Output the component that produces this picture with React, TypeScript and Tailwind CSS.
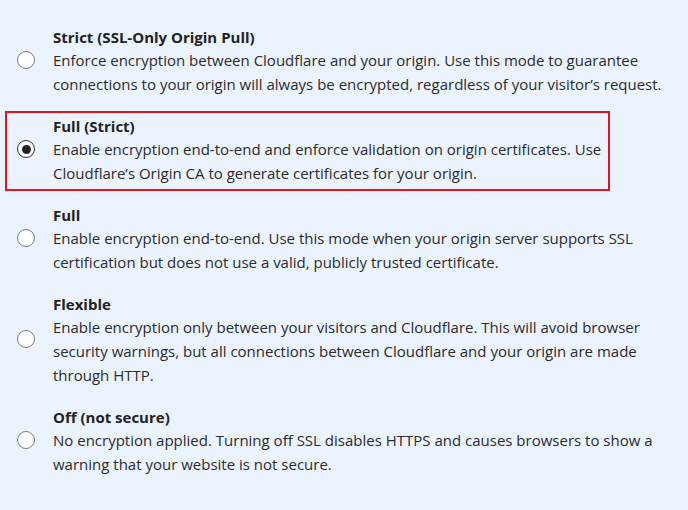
import React from 'react';

type Mode = {
  id: string;
  title: string;
  desc: string;
};

const modes: Mode[] = [
  {
    id: 'strict-ssl',
    title: 'Strict (SSL-Only Origin Pull)',
    desc: 'Enforce encryption between Cloudflare and your origin. Use this mode to guarantee connections to your origin will always be encrypted, regardless of your visitor\u2019s request.',
  },
  {
    id: 'full-strict',
    title: 'Full (Strict)',
    desc: 'Enable encryption end-to-end and enforce validation on origin certificates. Use Cloudflare\u2019s Origin CA to generate certificates for your origin.',
  },
  {
    id: 'full',
    title: 'Full',
    desc: 'Enable encryption end-to-end. Use this mode when your origin server supports SSL certification but does not use a valid, publicly trusted certificate.',
  },
  {
    id: 'flexible',
    title: 'Flexible',
    desc: 'Enable encryption only between your visitors and Cloudflare. This will avoid browser security warnings, but all connections between Cloudflare and your origin are made through HTTP.',
  },
  {
    id: 'off',
    title: 'Off (not secure)',
    desc: 'No encryption applied. Turning off SSL disables HTTPS and causes browsers to show a warning that your website is not secure.',
  },
];

const Radio = ({ checked }: { checked: boolean }) => (
  <span
    className={
      checked
        ? 'flex h-[18px] w-[18px] shrink-0 items-center justify-center rounded-full border border-[#333] bg-white'
        : 'flex h-[18px] w-[18px] shrink-0 items-center justify-center rounded-full border border-[#7a7a7a] bg-white'
    }
  >
    {checked && <span className="h-[9px] w-[9px] rounded-full bg-[#222]" />}
  </span>
);

export default function App() {
  const selected = 'full-strict';

  return (
    <div
      className="h-[510px] w-[688px] overflow-hidden bg-[#ebf3fe] pl-[17px] pt-[26px] text-[#2b2b2b]"
      style={{ fontFamily: '"Open Sans", "Noto Sans", Arial, sans-serif' }}
    >
      <div className="flex flex-col gap-[19px]">
        {modes.map((m) => {
          const isOn = m.id === selected;
          return (
            <div key={m.id} className="relative flex items-center">
              {/* red highlight drawn over the chosen option */}
              {isOn && (
                <span className="pointer-events-none absolute -bottom-[6px] -left-[12px] -top-[4px] w-[605px] border-2 border-[#e3151c]" />
              )}
              <span className="-mt-[2px]">
                <Radio checked={isOn} />
              </span>
              <div className="ml-[18px] w-[615px]">
                <div className="text-[15px] font-bold leading-[22px] text-[#222]">{m.title}</div>
                <p className="text-[15px] leading-[24px]">{m.desc}</p>
              </div>
            </div>
          );
        })}
      </div>
    </div>
  );
}
